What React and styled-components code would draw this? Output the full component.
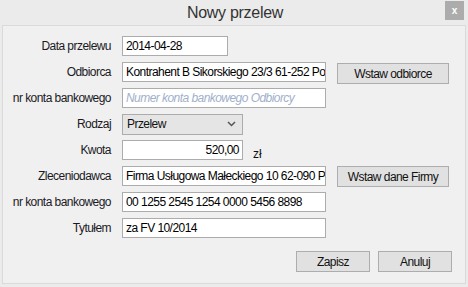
import React from 'react'
import styled, { createGlobalStyle } from 'styled-components'

const Global = createGlobalStyle`
  html, body {
    margin: 0;
    padding: 0;
    background: #ebebeb;
  }
  body {
    font-family: "Liberation Sans", Arial, sans-serif;
    color: #111;
  }
`

const Window = styled.div`
  width: 468px;
  height: 287px;
  background: #ebebeb;
  display: flex;
  flex-direction: column;
  box-sizing: border-box;
`

const TitleBar = styled.div`
  height: 25px;
  position: relative;
  display: flex;
  align-items: center;
  justify-content: center;
`

const Title = styled.div`
  font-size: 16px;
  letter-spacing: -0.3px;
  color: #333;
  line-height: 25px;
  padding-left: 2px;
`

const CloseButton = styled.div`
  position: absolute;
  top: 1px;
  right: 4px;
  width: 19px;
  height: 19px;
  background: #acacac;
  color: #fff;
  font-size: 10px;
  font-weight: bold;
  display: flex;
  align-items: center;
  justify-content: center;
  line-height: 1;
`

const Panel = styled.div`
  margin: 0 2px;
  height: 259px;
  box-sizing: border-box;
  border: 1px solid #dadada;
  background: #f0f0f0;
  padding: 10px 13px 0 0;
  display: flex;
  flex-direction: column;
`

const Form = styled.div`
  display: grid;
  grid-template-columns: 108px 204px 112px;
  grid-auto-rows: 20px;
  column-gap: 11px;
  row-gap: 6px;
  align-items: center;
`

const Label = styled.div`
  text-align: right;
  font-size: 12px;
  letter-spacing: -0.55px;
  color: #1a1a24;
  white-space: nowrap;
`

const Input = styled.div`
  box-sizing: border-box;
  height: 20px;
  width: ${p => p.$w || 204}px;
  border: 1px solid #acacac;
  background: #fff;
  font-size: 12px;
  letter-spacing: -0.55px;
  line-height: 18px;
  padding: 0 3px;
  white-space: nowrap;
  overflow: hidden;
  text-align: ${p => (p.$right ? 'right' : 'left')};
  color: ${p => (p.$placeholder ? '#9fb0cb' : '#000')};
  font-style: ${p => (p.$placeholder ? 'italic' : 'normal')};
`

const Select = styled.div`
  box-sizing: border-box;
  height: 21px;
  width: 121px;
  border: 1px solid #acacac;
  background: #e5e5e5;
  font-size: 12px;
  letter-spacing: -0.55px;
  display: flex;
  align-items: center;
  justify-content: space-between;
  padding: 0 6px 0 4px;
`

const Inline = styled.div`
  display: flex;
  align-items: center;
  grid-column: span 2;
`

const Unit = styled.span`
  font-size: 12px;
  margin-left: 10px;
  margin-top: 8px;
`

const Button = styled.div`
  box-sizing: border-box;
  width: ${p => p.$w || 112}px;
  height: 21px;
  border: 1px solid #adadad;
  background: #e1e1e1;
  font-size: 12px;
  letter-spacing: -0.55px;
  display: flex;
  align-items: center;
  justify-content: center;
  align-self: start;
  margin-top: ${p => p.$mt || 0}px;
`

const Footer = styled.div`
  display: flex;
  justify-content: flex-end;
  gap: 8px;
  margin-top: 13px;
`

const Chevron = () => (
  <svg width="9" height="6" viewBox="0 0 9 6">
    <path d="M1 1 L4.5 4.5 L8 1" stroke="#555" strokeWidth="1.5" fill="none" />
  </svg>
)

export default function App() {
  return (
    <Window>
      <Global />
      <TitleBar>
        <Title>Nowy przelew</Title>
        <CloseButton>x</CloseButton>
      </TitleBar>
      <Panel>
        <Form>
          <Label>Data przelewu</Label>
          <Input $w={106}>2014-04-28</Input>
          <div />

          <Label>Odbiorca</Label>
          <Input>Kontrahent B Sikorskiego 23/3 61-252 Po</Input>
          <Button $mt={1}>Wstaw odbiorce</Button>

          <Label>nr konta bankowego</Label>
          <Input $placeholder>Numer konta bankowego Odbiorcy</Input>
          <div />

          <Label>Rodzaj</Label>
          <Select>
            <span>Przelew</span>
            <Chevron />
          </Select>
          <div />

          <Label>Kwota</Label>
          <Inline>
            <Input $w={121} $right>520,00</Input>
            <Unit>zł</Unit>
          </Inline>

          <Label>Zleceniodawca</Label>
          <Input>Firma Usługowa Małeckiego 10 62-090 P</Input>
          <Button>Wstaw dane Firmy</Button>

          <Label>nr konta bankowego</Label>
          <Input>00 1255 2545 1254 0000 5456 8898</Input>
          <div />

          <Label>Tytułem</Label>
          <Input>za FV 10/2014</Input>
          <div />
        </Form>
        <Footer>
          <Button $w={74}>Zapisz</Button>
          <Button $w={74}>Anuluj</Button>
        </Footer>
      </Panel>
    </Window>
  )
}
